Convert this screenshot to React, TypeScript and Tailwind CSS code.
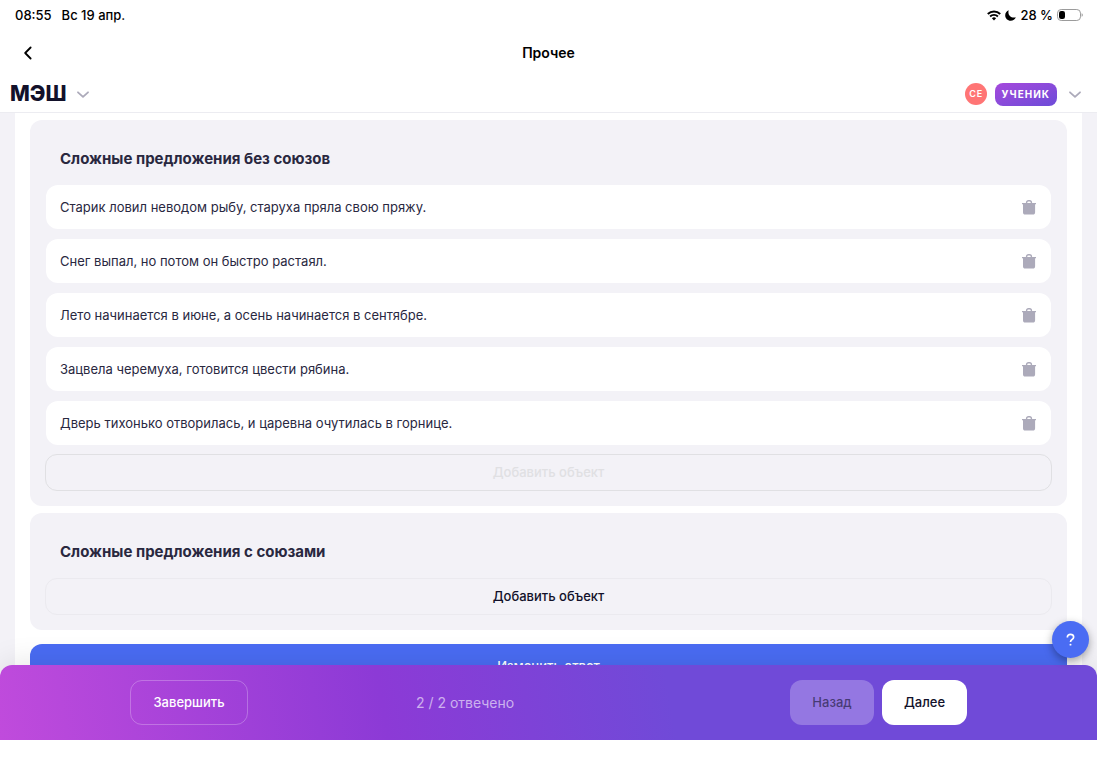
import React from "react";

const groups = [
  {
    title: "Сложные предложения без союзов",
    items: [
      "Старик ловил неводом рыбу, старуха пряла свою пряжу.",
      "Снег выпал, но потом он быстро растаял.",
      "Лето начинается в июне, а осень начинается в сентябре.",
      "Зацвела черемуха, готовится цвести рябина.",
      "Дверь тихонько отворилась, и царевна очутилась в горнице.",
    ],
    full: true,
  },
  { title: "Сложные предложения с союзами", items: [], full: false },
];

function WifiIcon() {
  return (
    <svg width="14" height="11" viewBox="0 0 14 11" fill="none" stroke="currentColor" aria-hidden="true">
      <path d="M.8 4a8.800 8.800 0 0 1 12.400 0" strokeWidth="2" />
      <path d="M3.100 6.500a5.500 5.500 0 0 1 7.800 0" strokeWidth="1.900" />
      <path d="M7 10.400 4.900 8.300a3 3 0 0 1 4.200 0Z" fill="currentColor" stroke="none" />
    </svg>
  );
}

function MoonIcon() {
  return (
    <svg width="11" height="11" viewBox="0 0 11 11" fill="currentColor" aria-hidden="true">
      <path d="M3.700.2C1.600 1 .2 2.900.2 5.200c0 3.100 2.400 5.500 5.500 5.500 2.400 0 4.300-1.400 5.100-3.500-.6.200-1.200.3-1.900.3-3.100 0-5.500-2.200-5.500-5.300 0-.7.100-1.400.3-2Z" />
    </svg>
  );
}

function BatteryIcon() {
  return (
    <svg width="26" height="12" viewBox="0 0 26 12" fill="none" aria-hidden="true">
      <rect x=".5" y=".5" width="23" height="11" rx="3.700" stroke="#9b9b9b" />
      <rect x="2" y="2" width="6" height="8" rx="2.200" fill="#000" />
      <path d="M24.600 4.200c.8.3 1.200 1 1.200 1.800s-.4 1.500-1.200 1.800Z" fill="#9b9b9b" />
    </svg>
  );
}

function ChevronDown() {
  return (
    <svg width="12" height="8" viewBox="0 0 12 8" fill="none" stroke="#acaaba" strokeWidth="1.800" strokeLinecap="round" strokeLinejoin="round" aria-hidden="true">
      <path d="M1 2.300l5 4.500 5-4.500" />
    </svg>
  );
}

function TrashIcon() {
  return (
    <svg width="14" height="15" viewBox="0 0 14 15" fill="none" aria-hidden="true">
      <path d="M4.600 3.800V2.600C4.600 1.300 5.400.7 6.400.7h1.200c1 0 1.800.6 1.800 1.900v1.200" stroke="#acaaba" strokeWidth="1.400" />
      <path d="M0 3.100h14v1.200h-.9v7.900c0 1.500-.7 2.300-2.300 2.300H3.300C1.700 14.500 1 13.700 1 12.200V4.300H0Z" fill="#acaaba" />
    </svg>
  );
}

export default function App() {
  return (
    <div className="flex h-screen flex-col overflow-hidden bg-white font-['Inter',sans-serif] text-[#12112a]">
      <div className="flex h-[30px] shrink-0 items-center justify-between pr-3.5 pl-[15px] text-[13px] leading-5 font-medium text-black">
        <div className="flex gap-2.5">
          <span>08:55</span>
          <span>Вс 19 апр.</span>
        </div>
        <div className="flex items-center gap-1">
          <WifiIcon />
          <MoonIcon />
          <span>28 %</span>
          <BatteryIcon />
        </div>
      </div>

      <div className="grid h-[46px] shrink-0 grid-cols-[1fr_auto_1fr] items-center px-4">
        <button type="button" aria-label="Назад к списку" className="flex size-6 items-center justify-center">
          <svg width="8" height="14" viewBox="0 0 8 14" fill="none" stroke="#000" strokeWidth="1.800" strokeLinecap="round" strokeLinejoin="round" aria-hidden="true">
            <path d="M6.600 1.500 1.200 7l5.400 5.500" />
          </svg>
        </button>
        <h1 className="text-sm font-semibold text-black">Прочее</h1>
      </div>

      <header className="flex h-[37px] shrink-0 items-center justify-between border-b border-[#ececf1] pr-4 pl-2.5">
        <button type="button" className="flex items-center gap-[11px]">
          <span className="text-[21px] leading-7 font-extrabold">МЭШ</span>
          <ChevronDown />
        </button>
        <button type="button" className="flex items-center">
          <span className="flex size-[22px] items-center justify-center rounded-full bg-[#ff7575] pl-px text-[9px] font-semibold tracking-widest text-white">СЕ</span>
          <span className="mr-3 ml-2 flex h-[23px] items-center rounded-lg bg-linear-to-br from-[#a548dc] to-[#6c4bd8] px-[7px] text-[10px] font-bold tracking-widest text-white">УЧЕНИК</span>
          <ChevronDown />
        </button>
      </header>

      <main className="min-h-0 flex-1 overflow-hidden bg-[#f3f2f7] px-[15px]">
        <div className="flex h-full flex-col bg-white px-[15px] pt-[7px]">
          {groups.map((group) => (
            <section key={group.title} className="mb-[7px] shrink-0 rounded-xl bg-[#f3f2f7] px-[15px] pt-[29px] pb-[15px]">
              <h2 className="mb-4 px-[15px] text-[15px] leading-5 font-[650] text-[#29283f]">{group.title}</h2>
              {group.items.length > 0 && (
                <ul className="mb-[9px] flex flex-col gap-2.5 px-px">
                  {group.items.map((item) => (
                    <li key={item} className="flex h-11 items-center justify-between rounded-xl bg-white pr-[15px] pl-3.5 text-[13px] leading-5 text-[#29283f]">
                      <span>{item}</span>
                      <button type="button" aria-label="Удалить">
                        <TrashIcon />
                      </button>
                    </li>
                  ))}
                </ul>
              )}
              <button
                type="button"
                disabled={group.full}
                className="h-[37px] w-full rounded-xl border border-[#ebeaef] text-[13px] font-medium disabled:border-[#e0e0e3] disabled:text-[#e0e0e3]"
              >
                Добавить объект
              </button>
            </section>
          ))}
          <button type="button" className="mt-[7px] h-[45px] shrink-0 rounded-xl bg-[#4a6cf3] text-[13px] font-medium text-white">
            Изменить ответ
          </button>
        </div>
      </main>

      <footer className="relative -mt-3 grid h-[75px] shrink-0 grid-cols-3 items-center rounded-t-xl bg-[linear-gradient(80deg,#c04bdc_0%,#8c3ad6_35%,#704ad8_61%)] px-[130px] text-[13px] font-medium shadow-[0_-2px_30px_rgba(0,0,0,0.1)]">
        <button type="button" className="h-[45px] w-[118px] rounded-xl border border-white/25 text-white">Завершить</button>
        <p className="pl-[7px] text-sm font-normal text-white/60">2 / 2 отвечено</p>
        <div className="flex justify-end gap-2">
          <button type="button" className="h-[45px] w-[84px] rounded-xl bg-white/25 text-[#12112a]/60">Назад</button>
          <button type="button" className="h-[45px] w-[85px] rounded-xl bg-white">Далее</button>
        </div>
        <button
          type="button"
          aria-label="Помощь"
          className="absolute -top-11 right-2 flex size-[37px] items-center justify-center rounded-full bg-[#4a6cf3] shadow-[0_3px_8px_rgba(0,0,0,0.35)]"
        >
          <svg width="9" height="13" viewBox="0 0 10 14" fill="none" stroke="#fff" strokeWidth="1.900" aria-hidden="true">
            <path d="M1.500 4.800C1.500 2.500 2.900 1.200 5 1.200s3.500 1.200 3.500 3c0 1.400-.8 2.100-1.800 2.800C5.500 7.800 5 8.400 5 9.800" />
            <circle cx="5" cy="12.700" r="1.100" fill="#fff" stroke="none" />
          </svg>
        </button>
      </footer>
      <div className="relative h-[23px] shrink-0 bg-white" />
    </div>
  );
}
